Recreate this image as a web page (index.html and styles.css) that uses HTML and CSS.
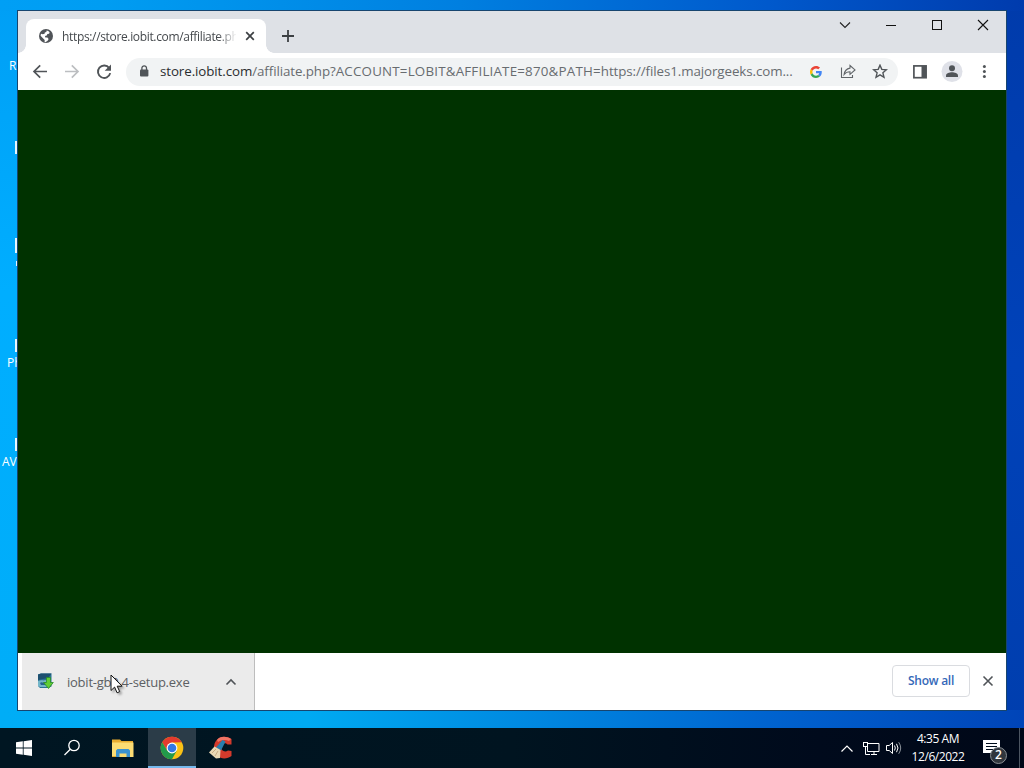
FILE: index.html
```html
<!DOCTYPE html>
<html lang="en">
<head>
  <meta charset="UTF-8">
  <meta name="viewport" content="width=device-width, initial-scale=1.0">
  <title>Desktop</title>
  <link rel="stylesheet" href="styles.css">
</head>
<body>
  <div class="desktop">
    <!-- Desktop icons, mostly hidden behind the window -->
    <span class="desk-label recycle">R</span>
    <span class="desk-label phone">Ph</span>
    <span class="desk-label avast">AV</span>
    <i class="sliver s1"></i>
    <i class="sliver s2"></i>
    <i class="sliver s3"></i>
    <i class="sliver s4"></i>
    <i class="sliver s5"></i>

    <!-- Browser window -->
    <div class="window">
      <div class="tabstrip">
        <div class="tab">
          <svg class="globe" width="16" height="16" viewBox="0 0 16 16">
            <circle cx="8" cy="8" r="7" fill="#505458"/>
            <path d="M8.7 2.6c1 .2 2.1.8 2.9 1.7l-.5 1.4-1.7.4-.7 1.5-1.7.5.3 1.3 2.1.2 1.2 1.5-.9 1.6-1 .3-.4 1.1c-.6.1-1.2 0-1.7-.1l.1-2-1.5-1.6-2.6-2.6c0-.7.2-1.4.5-2l1.6.5 1.9-.6.2-1.3 1.5-.5z" fill="#fff"/>
            <path d="M11.2 7.4l2.2.3c0 1.5-.6 2.9-1.6 3.9l-.3-2z" fill="#505458"/>
          </svg>
          <span class="tab-title">https://store.iobit.com/affiliate.ph</span>
          <svg class="tab-close" width="10" height="10" viewBox="0 0 10 10"><path d="M1.2 1.2l7.6 7.6M8.8 1.2L1.2 8.8" stroke="#3c4043" stroke-width="1.7"/></svg>
        </div>
        <svg class="new-tab" width="14" height="14" viewBox="0 0 14 14"><path d="M7 1v12M1 7h12" stroke="#3c4043" stroke-width="1.8"/></svg>
        <div class="win-buttons">
          <svg width="46" height="28" viewBox="0 0 46 28"><path d="M18 11.5l5 5 5-5" fill="none" stroke="#222" stroke-width="1.1"/></svg>
          <svg width="46" height="28" viewBox="0 0 46 28"><path d="M18 14.5h10" stroke="#111"/></svg>
          <svg width="46" height="28" viewBox="0 0 46 28"><rect x="18.5" y="9.5" width="9" height="9" fill="none" stroke="#111"/></svg>
          <svg width="46" height="28" viewBox="0 0 46 28"><path d="M18 9l10 10M28 9L18 19" stroke="#111" stroke-width="1.1"/></svg>
        </div>
      </div>

      <div class="toolbar">
        <svg class="nav" width="16" height="16" viewBox="0 0 16 16"><path d="M15 7.5H2.4M8.2 1.3L2 7.5l6.2 6.2" fill="none" stroke="#505458" stroke-width="1.7"/></svg>
        <svg class="nav" width="16" height="16" viewBox="0 0 16 16"><path d="M1 7.5h12.6M7.8 1.3L14 7.5l-6.2 6.2" fill="none" stroke="#bcbec1" stroke-width="1.7"/></svg>
        <svg class="nav" width="16" height="16" viewBox="0 0 16 16"><path d="M13.2 4.1A6.2 6.2 0 1 0 14.2 9.1" fill="none" stroke="#505458" stroke-width="1.9"/><path d="M15 .5v6.3H8.7z" fill="#505458"/></svg>
        <div class="omnibox">
          <svg class="lock" width="10" height="13" viewBox="0 0 10 13"><rect x="1" y="4.5" width="8.4" height="7" rx="1" fill="#505458"/><path d="M2.9 5V3.1a2.3 2.3 0 0 1 4.6 0V5" fill="none" stroke="#505458" stroke-width="1.3"/></svg>
          <span class="url"><b>store.iobit.com</b>/affiliate.php?<span class="query">ACCOUNT=LOBIT&amp;AFFILIATE=870&amp;PATH=</span>https://files1.majorgeeks.com...</span>
          <svg class="google" width="12" height="12" viewBox="0 0 48 48">
            <path fill="#ea4335" d="M24 9.5c3.5 0 6.7 1.2 9.2 3.6l6.9-6.9C35.9 2.4 30.5 0 24 0 14.6 0 6.5 5.4 2.6 13.2l8 6.2C12.4 13.7 17.7 9.5 24 9.5z"/>
            <path fill="#4285f4" d="M47 24.5c0-1.6-.1-3.1-.4-4.5H24v9h12.9c-.6 3-2.2 5.5-4.7 7.2l7.7 6C44.4 38 47 31.8 47 24.5z"/>
            <path fill="#fbbc05" d="M10.5 28.6c-.5-1.5-.8-3-.8-4.6s.3-3.1.8-4.6l-8-6.2C.9 16.5 0 20.1 0 24s.9 7.5 2.6 10.8z"/>
            <path fill="#34a853" d="M24 48c6.5 0 11.9-2.1 15.9-5.8l-7.7-6c-2.2 1.5-4.9 2.3-8.2 2.3-6.3 0-11.6-4.2-13.5-9.9l-8 6.2C6.5 42.6 14.6 48 24 48z"/>
          </svg>
          <svg class="share" width="16" height="16" viewBox="0 0 16 16" fill="none" stroke="#606468" stroke-width="1.1"><path d="M1.5 3.5v10h11V11"/><path d="M10 1.5l5 4.4-5 4.4V7.8C7.3 7.8 5.5 8.7 4.1 10.5c.4-3.2 2.3-5.8 5.9-6.4z"/></svg>
          <svg class="star" width="16" height="16" viewBox="0 0 16 16"><path d="M8 1.2l1.8 4.2 4.6.4-3.5 3 1.1 4.5L8 10.9l-4 2.4 1.1-4.5-3.5-3 4.6-.4z" fill="none" stroke="#505458" stroke-width="1.4"/></svg>
        </div>
        <svg class="side" width="14" height="14" viewBox="0 0 14 14"><rect x=".9" y=".9" width="12.2" height="11.8" fill="none" stroke="#505458" stroke-width="1.7"/><path d="M8.5 1H13v12H8.5z" fill="#505458"/></svg>
        <svg class="avatar" width="22" height="22" viewBox="0 0 22 22"><circle cx="11" cy="10.5" r="10.5" fill="#dfe1e8"/><circle cx="11" cy="7.3" r="3" fill="#505458"/><path d="M5 16v-1.6c0-2 3.5-3.1 6-3.1s6 1.1 6 3.1V16z" fill="#505458"/></svg>
        <svg class="menu" width="4" height="14" viewBox="0 0 4 14" fill="#505458"><circle cx="2.4" cy="1.6" r="1.5"/><circle cx="2.4" cy="6.6" r="1.5"/><circle cx="2.4" cy="11.6" r="1.5"/></svg>
      </div>

      <div class="page"></div>

      <!-- Download shelf -->
      <div class="shelf">
        <div class="download">
          <svg width="17" height="17" viewBox="0 0 17 17">
            <path d="M1 1.5L4 .5h10.5v13L11 15H3l-2-2z" fill="#2a7293"/>
            <path d="M1 1.5L4 .5h10.5L11 5 1 7z" fill="#1d5070"/>
            <path d="M1 8c4-2 6 1 9-2v8H3l-2-1z" fill="#73b6c9"/>
            <path d="M3 10c2-2 3 1 6-1v3H4z" fill="#28658e"/>
            <path d="M9.5 4.5h4v5h2.8L11.5 15.5l-5-6h3z" fill="#61ce35" stroke="#278b28" stroke-width=".8"/>
          </svg>
          <span class="filename">iobit-gb9.4-setup.exe</span>
          <svg width="12" height="8" viewBox="0 0 12 8"><path d="M1.5 6.5L6 2l4.5 4.5" fill="none" stroke="#505458" stroke-width="1.6"/></svg>
        </div>
        <button class="show-all">Show all</button>
        <svg class="shelf-close" width="12" height="12" viewBox="0 0 12 12"><path d="M1.5 1.5l9 9M10.5 1.5l-9 9" stroke="#505458" stroke-width="1.6"/></svg>
      </div>
    </div>

    <svg class="cursor" width="15" height="21" viewBox="0 0 15 21"><path d="M1 1v15.5l3.6-3.4 2.5 5.7 2.6-1.2-2.5-5.4h4.9z" fill="#fff" stroke="#111"/></svg>
  </div>

  <div class="taskbar">
    <div class="task start"><svg width="16" height="16" viewBox="0 0 16 16" fill="#fff"><path d="M0 2.3l6.8-1v6.3H0zM7.6 1.2L16 0v7.6H7.6zM0 8.4h6.8v6.3l-6.8-1zM7.6 8.4H16V16l-8.4-1.2z"/></svg></div>
    <div class="task search"><svg width="18" height="18" viewBox="0 0 18 18" fill="none" stroke="#fff" stroke-width="1.3"><circle cx="11" cy="6.5" r="5.2"/><path d="M7.3 10.2L1.5 16"/></svg></div>
    <div class="task explorer">
      <svg width="22" height="19" viewBox="0 0 22 19"><path d="M0 .5h8L9.5 2H21v16H0z" fill="#e8ac30"/><path d="M0 3.5h21.5V18H0z" fill="#fcdc73"/><path d="M4 18v-6.500l1.500-1.500h11l1.500 1.500V18h-3.500v-3.500h-7V18z" fill="#3b92cf"/><path d="M0 17h4v1H0z" fill="#e8ac30"/></svg>
    </div>
    <div class="task active">
      <svg width="24" height="24" viewBox="0 0 24 24">
        <circle cx="12" cy="12" r="11.3" fill="#fbc116"/>
        <path d="M2.2 6.35A11.3 11.3 0 0 1 21.8 6.35L12 6.6 7.3 14.7z" fill="#e33b2e"/>
        <path d="M2.2 6.35A11.3 11.3 0 0 0 12 23.3L16.7 14.7 7.3 14.7z" fill="#229a4b"/>
        <circle cx="12" cy="12" r="5.4" fill="#fff"/>
        <circle cx="12" cy="12" r="4.3" fill="#3378e5"/>
      </svg>
    </div>
    <div class="task cleaner">
      <svg width="26" height="24" viewBox="0 0 26 24">
        <path d="M23.5 3v5.5h-4c-2-2.5-6-1.5-6.5 2.5 0 4 4 5.5 7 3.5l3.5.5v5c-4 3-10 3.5-14 0C4 15 5 4.500 12 1.500c4-1.500 8-1 11.500 1.500z" fill="#d43a2c"/>
        <path d="M9 4c3-4 9-4 14-1l-2 2c-4-2-8-1-11 1z" fill="#ee7465"/>
        <path d="M14.5 4l3 1.500-4.500 9-5-3z" fill="#287eae"/>
        <path d="M6.5 10.5l6 3.5-.5 8-4 .5-7-6z" fill="#ead9b6"/>
        <path d="M4 17l4-4M7 20l3-5" stroke="#c9ac85"/>
      </svg>
    </div>

    <div class="tray">
      <svg class="up" width="14" height="9" viewBox="0 0 14 9"><path d="M1.5 7.5L7 2l5.500 5.500" fill="none" stroke="#fff" stroke-width="1.2"/></svg>
      <svg class="net" width="17" height="15" viewBox="0 0 17 15" fill="none" stroke="#fff"><path d="M5 2.5h11v8H4.5V6M8 13.5h6M11 10.5v3M2.5 5.5v8H7"/><rect x=".5" y="1.5" width="4" height="4"/></svg>
      <svg class="sound" width="16" height="14" viewBox="0 0 16 14" fill="none" stroke="#fff"><path d="M.5 4.5h2.7L6.5 1.5v11L3.2 9.5H.5z"/><path d="M8.5 4.5q1.6 2.5 0 5M10.5 2.8q3 4.2 0 8.4"/><path d="M12.7 1.2q4 5.8 0 11.6" stroke="#8b929a"/></svg>
      <div class="clock"><span>4:35 AM</span><span>12/6/2022</span></div>
      <div class="notify">
        <svg width="17" height="17" viewBox="0 0 17 17"><path d="M0 0h17v13h-6l-3 3.5V13H0z" fill="#fff"/><path d="M3 3.5h11M3 6.5h11M3 9.5h8" stroke="#000d1c"/></svg>
        <span class="badge">2</span>
      </div>
      <div class="peek"></div>
    </div>
  </div>
</body>
</html>
```
FILE: styles.css
```css
* {
  box-sizing: border-box;
}
body {
  margin: 0;
  width: 1024px;
  height: 768px;
  overflow: hidden;
  font-family: "Open Sans", "Noto Sans", sans-serif;
  font-size: 12px;
}
svg {
  display: block;
  flex: none;
}

/* Desktop */
.desktop {
  position: relative;
  height: 728px;
  padding: 10px 17px 0;
  background:
    linear-gradient(90deg, #009ff5 0, #009df2 10%, #007fe0 45%, #0059cc 75%, #003bad 100%) top / 100% 11px no-repeat,
    linear-gradient(90deg, #00adf6 0, #00aaf2 30%, #008be2 50%, #0063cf 75%, #0044b8 100%) bottom / 100% 18px no-repeat,
    linear-gradient(#009ff5, #00aeff 40%, #00adf8) left / 50% 100% no-repeat,
    linear-gradient(#003bab, #0042b9 50%, #003eae) right / 50% 100% no-repeat;
}
.desk-label {
  position: absolute;
  color: #fff;
  font-size: 12px;
  line-height: 16px;
}
.recycle { left: 9px; top: 58px; }
.phone { left: 7px; top: 355px; }
.avast { left: 2px; top: 454px; }
.sliver {
  position: absolute;
  left: 15px;
  width: 2px;
  height: 13px;
  background: #e7f6fc;
}
.s1 { top: 141px; }
.s2 { top: 238px; height: 15px; }
.s3 { top: 261px; left: 16px; width: 1px; height: 5px; }
.s4 { top: 339px; }
.s5 { top: 438px; }

/* Browser window */
.window {
  position: relative;
  display: flex;
  flex-direction: column;
  height: 701px;
  border: 1px solid #17456f;
  background: #fff;
}
.tabstrip {
  display: flex;
  height: 42px;
  background: #dee1e6;
}
.tab {
  position: relative;
  display: flex;
  align-items: center;
  width: 240px;
  height: 34px;
  margin: 8px 0 0 8px;
  padding-left: 12px;
  border-radius: 8px 8px 0 0;
  background: #fff;
}
.tab::before,
.tab::after {
  content: "";
  position: absolute;
  bottom: 0;
  width: 8px;
  height: 8px;
}
.tab::before {
  left: -8px;
  background: radial-gradient(circle at 0 0, transparent 7.5px, #fff 8px);
}
.tab::after {
  right: -8px;
  background: radial-gradient(circle at 100% 0, transparent 7.5px, #fff 8px);
}
.tab-title {
  width: 174px;
  margin-left: 8px;
  white-space: nowrap;
  color: #45494d;
  letter-spacing: -0.34px;
  -webkit-mask-image: linear-gradient(90deg, #000 156px, transparent 175px);
  mask-image: linear-gradient(90deg, #000 156px, transparent 175px);
}
.tab-close {
  margin-left: 9px;
}
.new-tab {
  margin: 18px 0 0 15px;
}
.win-buttons {
  display: flex;
  margin-left: auto;
}

/* Toolbar */
.toolbar {
  display: flex;
  align-items: center;
  height: 37px;
  padding-left: 14px;
  background: #fff;
}
.nav {
  margin-right: 16px;
}
.omnibox {
  display: flex;
  align-items: center;
  width: 772px;
  height: 28px;
  margin-left: -2px;
  padding-left: 13px;
  border-radius: 14px;
  background: #f1f3f4;
}
.url {
  width: 640px;
  margin-left: 11px;
  padding-bottom: 2px;
  white-space: nowrap;
  color: #686c70;
  font-size: 13.35px;
  letter-spacing: -0.09px;
}
.url b {
  color: #2a2d30;
  font-weight: 400;
}
.query {
  letter-spacing: 0.2px;
}
.google { margin-left: 10px; }
.share { margin-left: 18px; }
.star { margin-left: 16px; }
.side { margin-left: 15px; }
.avatar { margin-left: 14px; }
.menu { margin-left: 19px; }
.page {
  flex: 1;
  background: #003200;
}

/* Download shelf */
.shelf {
  display: flex;
  align-items: center;
  height: 57px;
}
.download {
  display: flex;
  align-items: center;
  width: 233px;
  height: 57px;
  margin-left: 4px;
  padding-left: 15px;
  border-right: 1px solid #bdbdbd;
  background: #ebebeb;
}
.filename {
  width: 150px;
  margin: 0 8px 0 13px;
  white-space: nowrap;
  color: #5c5f63;
  font-size: 13px;
  letter-spacing: -0.24px;
}
.show-all {
  width: 78px;
  height: 32px;
  margin: 0 0 2px auto;
  padding: 0;
  border: 1px solid #dadce0;
  border-radius: 4px;
  background: #fff;
  color: #3568b8;
  font: 600 12px "Open Sans", sans-serif;
  letter-spacing: -0.25px;
}
.shelf-close {
  margin: 0 12px 2px;
}
.cursor {
  position: absolute;
  left: 110px;
  top: 674px;
  filter: drop-shadow(2px 2px 1px rgba(0, 0, 0, 0.3));
}

/* Taskbar */
.taskbar {
  display: flex;
  height: 40px;
  background: linear-gradient(90deg, #001622, #001420 50%, #000a1c 80%, #000818);
  color: #fff;
}
.task {
  display: flex;
  align-items: center;
  justify-content: center;
  width: 48px;
  margin-left: 2px;
}
.start,
.search {
  margin-left: 0;
}
.explorer {
  padding-left: 2px;
}
.cleaner {
  padding-right: 2px;
}
.active {
  border-bottom: 2px solid #76b9ed;
  padding-top: 2px;
  background: #2b3c48;
}
.tray {
  display: flex;
  align-items: center;
  margin-left: auto;
}
.net { margin-left: 9px; }
.sound { margin-left: 6px; }
.clock {
  display: flex;
  flex-direction: column;
  width: 60px;
  margin-left: 6px;
  text-align: center;
  line-height: 18px;
  letter-spacing: -0.45px;
}
.notify {
  position: relative;
  margin-left: 15px;
}
.badge {
  position: absolute;
  left: 7px;
  top: 7px;
  width: 17px;
  height: 17px;
  border: 1px solid #8a8f94;
  border-radius: 50%;
  background: #30363d;
  font-size: 12px;
  font-weight: 600;
  line-height: 14px;
  text-align: center;
}
.peek {
  width: 5px;
  height: 40px;
  margin-left: 19px;
  border-left: 1px solid #4c5561;
}
```
